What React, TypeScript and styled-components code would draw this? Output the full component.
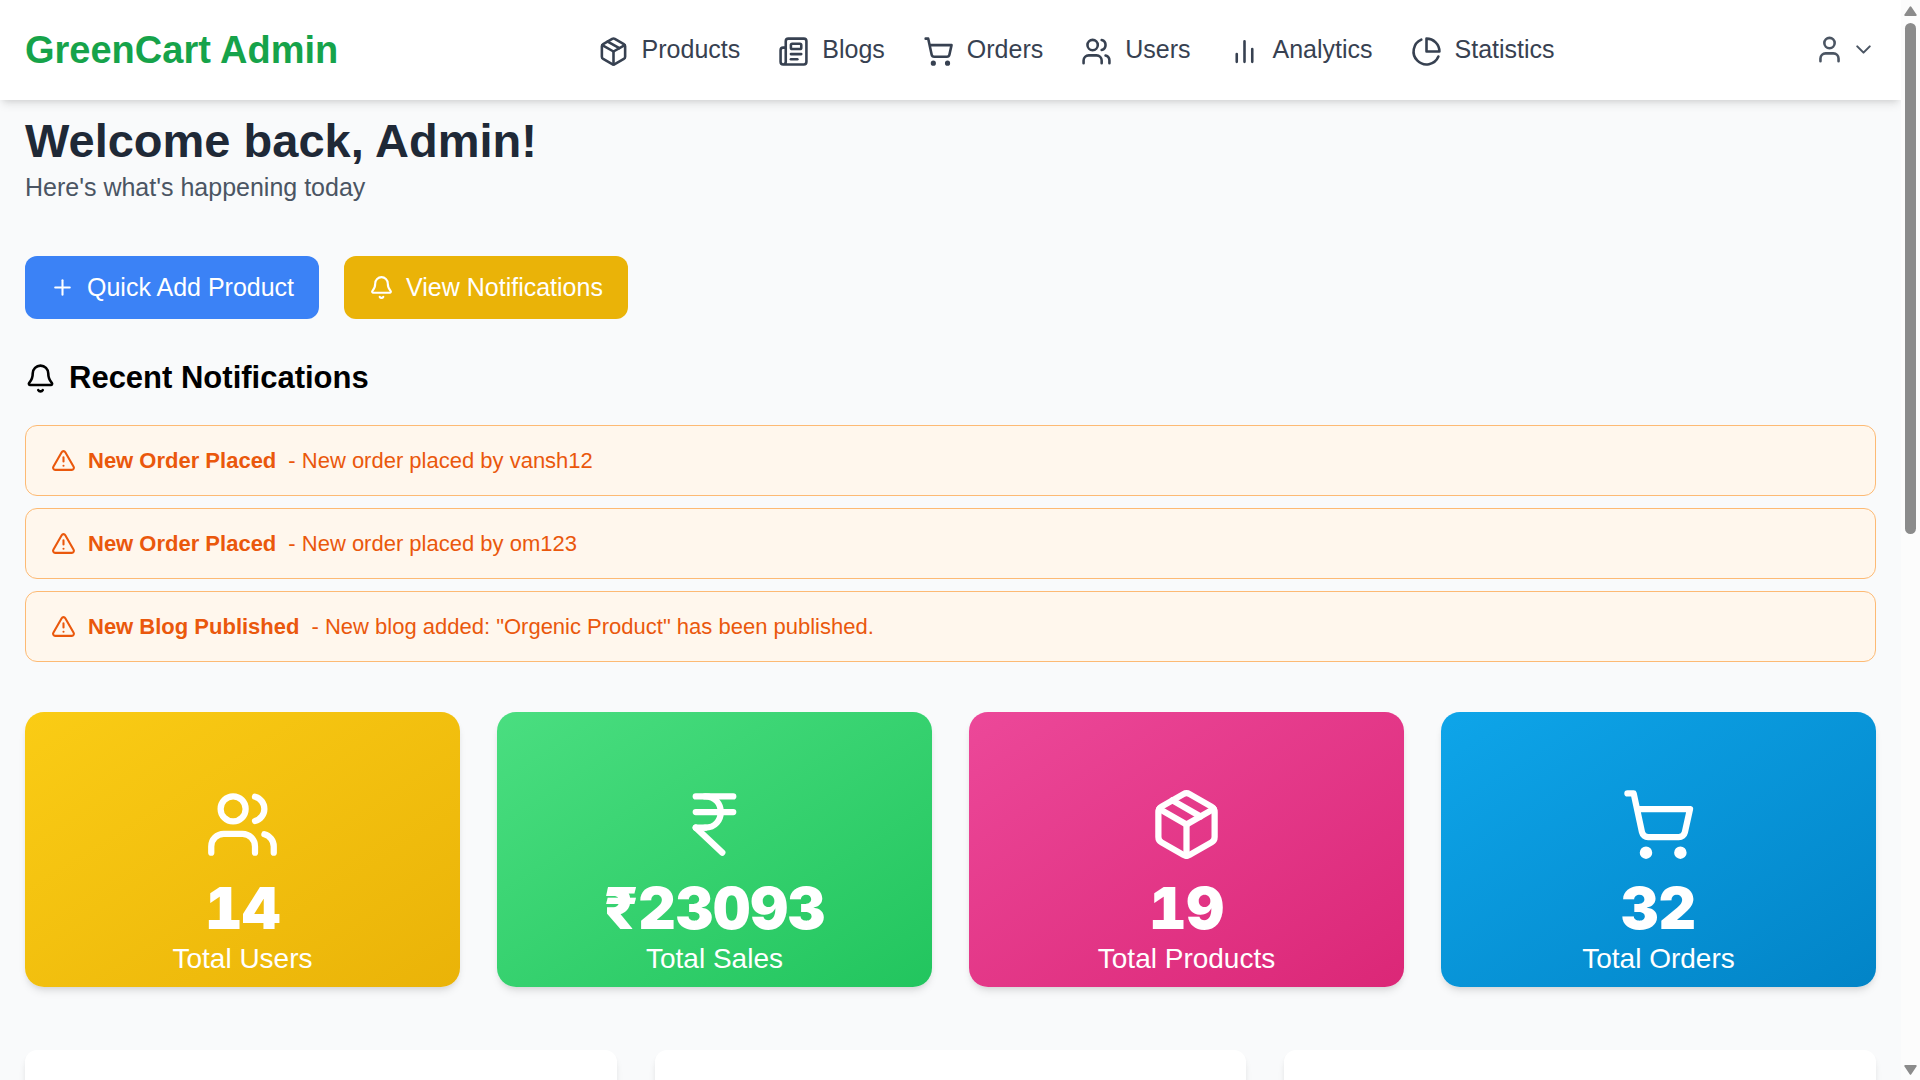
import React from "react";
import styled, { createGlobalStyle } from "styled-components";
import {
  Bell,
  ChevronDown,
  IndianRupee,
  Newspaper,
  Package,
  Plus,
  ShoppingCart,
  TriangleAlert,
  User,
  Users,
} from "lucide-react";

const GlobalStyle = createGlobalStyle`
  *, *::before, *::after { box-sizing: border-box; }
  body {
    margin: 0;
    overflow: hidden;
    background: #f9fafb;
    font-family: "Liberation Sans", Arial, sans-serif;
    font-size: 25px;
    line-height: 37px;
    color: #000;
  }
  h1, h2, p, ul { margin: 0; padding: 0; }
  ul { list-style: none; }
  button { font: inherit; border: 0; cursor: pointer; }
  svg { flex-shrink: 0; }
`;

const Shell = styled.div`
  display: grid;
  grid-template-columns: minmax(0, 1fr) 19px;
  height: 100vh;
`;

const Page = styled.div`
  overflow: hidden;
  background: #f9fafb;
`;

const Header = styled.header`
  display: flex;
  align-items: center;
  justify-content: space-between;
  height: 100px;
  padding: 0 25px;
  background: #fff;
  box-shadow: 0 6px 9px -2px rgba(0, 0, 0, 0.1), 0 3px 6px -3px rgba(0, 0, 0, 0.1);
`;

const Brand = styled.a`
  font-size: 38px;
  line-height: 50px;
  font-weight: 700;
  color: #16a34a;
  text-decoration: none;
`;

const Nav = styled.nav`
  display: flex;
  gap: 38px;
  padding-bottom: 1px;
`;

const NavLink = styled.a`
  color: #374151;
  text-decoration: none;
  white-space: nowrap;

  svg {
    margin-right: 13px;
    vertical-align: middle;
  }
`;

const AccountButton = styled.button`
  display: flex;
  align-items: center;
  gap: 6px;
  padding: 0 0 1px;
  background: none;
  color: #4b5563;
`;

const Main = styled.main`
  padding: 13px 25px 0;
`;

const Title = styled.h1`
  font-size: 47px;
  line-height: 56px;
  color: #1f2937;
`;

const Subtitle = styled.p`
  color: #4b5563;
`;

const Actions = styled.div`
  display: flex;
  gap: 25px;
  margin-top: 50px;
`;

const ActionButton = styled.button<{ $color: string }>`
  display: flex;
  align-items: center;
  gap: 12px;
  padding: 13px 25px;
  border-radius: 12px;
  background: ${(p) => p.$color};
  color: #fff;
`;

const SectionTitle = styled.h2`
  display: flex;
  align-items: center;
  gap: 13px;
  margin: 37px 0 25px;
  font-size: 31px;
  line-height: 44px;
`;

const NoticeList = styled.ul`
  display: grid;
  gap: 12px;
`;

const Notice = styled.li`
  display: flex;
  align-items: center;
  gap: 12px;
  padding: 19px 25px;
  border: 1px solid #fdba74;
  border-radius: 12px;
  background: #fff7ed;
  color: #ea580c;
  font-size: 22px;
  line-height: 31px;
`;

const StatGrid = styled.section`
  display: grid;
  grid-template-columns: repeat(4, 1fr);
  gap: 37px;
  margin-top: 50px;
`;

const StatCard = styled.article<{ $from: string; $to: string }>`
  display: flex;
  flex-direction: column;
  align-items: center;
  padding: 75px 25px 8px;
  border-radius: 19px;
  background: linear-gradient(to bottom right, ${(p) => p.$from}, ${(p) => p.$to});
  box-shadow: 0 6px 9px -2px rgba(0, 0, 0, 0.1), 0 3px 6px -3px rgba(0, 0, 0, 0.1);
  color: #fff;
`;

const StatValue = styled.p`
  margin-top: 15px;
  font-family: "Arial Black", Inter, sans-serif;
  font-size: 58px;
  line-height: 62px;
  font-weight: 900;
  font-variant-numeric: tabular-nums;
`;

const StatLabel = styled.p`
  font-size: 28px;
  line-height: 40px;
`;

const PanelGrid = styled.section`
  display: grid;
  grid-template-columns: repeat(3, 1fr);
  gap: 38px;
  margin-top: 63px;
`;

const Panel = styled.div`
  min-height: 400px;
  border-radius: 12px;
  background: #fff;
  box-shadow: 0 6px 9px -2px rgba(0, 0, 0, 0.1), 0 3px 6px -3px rgba(0, 0, 0, 0.1);
`;

const ScrollTrack = styled.div`
  display: flex;
  flex-direction: column;
  align-items: center;
  padding: 6px 0 5px;
  background: #fcfcfc;
`;

const ScrollRail = styled.div`
  display: grid;
  grid-template-rows: 40fr 41fr;
  flex: 1;
  width: 11px;
  margin: 7px 0;
`;

const ScrollThumb = styled.div`
  border-radius: 6px;
  background: #8b8b8b;
`;

type IconProps = { size: number };

const strokeProps = {
  viewBox: "0 0 24 24",
  fill: "none",
  stroke: "currentColor",
  strokeWidth: 2,
  strokeLinecap: "round" as const,
  strokeLinejoin: "round" as const,
};

const BarsIcon = ({ size }: IconProps) => (
  <svg width={size} height={size} {...strokeProps}>
    <path d="M18 20V10M12 20V4M6 20v-6" />
  </svg>
);

const PieIcon = ({ size }: IconProps) => (
  <svg width={size} height={size} {...strokeProps}>
    <path d="M21.21 15.89A10 10 0 1 1 8 2.83" />
    <path d="M22 12A10 10 0 0 0 12 2v10z" />
  </svg>
);

const Arrow = ({ down }: { down?: boolean }) => (
  <svg width="13" height="10" viewBox="0 0 13 10" fill="#8b8b8b">
    <path
      d={
        down
          ? "M1.5 0h10a1 1 0 0 1 1 1.6L7.3 9.2a1 1 0 0 1-1.6 0L.5 1.6A1 1 0 0 1 1.5 0z"
          : "M1.5 10h10a1 1 0 0 0 1-1.6L7.3.8a1 1 0 0 0-1.6 0L.5 8.4A1 1 0 0 0 1.5 10z"
      }
    />
  </svg>
);

const navItems = [
  { label: "Products", Icon: Package },
  { label: "Blogs", Icon: Newspaper },
  { label: "Orders", Icon: ShoppingCart },
  { label: "Users", Icon: Users },
  { label: "Analytics", Icon: BarsIcon },
  { label: "Statistics", Icon: PieIcon },
];

const notices = [
  { title: "New Order Placed", text: "New order placed by vansh12" },
  { title: "New Order Placed", text: "New order placed by om123" },
  { title: "New Blog Published", text: 'New blog added: "Orgenic Product" has been published.' },
];

const stats = [
  { value: "14", label: "Total Users", Icon: Users, from: "#facc15", to: "#eab308" },
  { value: "₹23093", label: "Total Sales", Icon: IndianRupee, from: "#4ade80", to: "#22c55e" },
  { value: "19", label: "Total Products", Icon: Package, from: "#ec4899", to: "#db2777" },
  { value: "32", label: "Total Orders", Icon: ShoppingCart, from: "#0ea5e9", to: "#0284c7" },
];

export default function App() {
  return (
    <>
      <GlobalStyle />
      <Shell>
        <Page>
          <Header>
            <Brand href="#home">GreenCart Admin</Brand>
            <Nav>
              {navItems.map(({ label, Icon }) => (
                <NavLink key={label} href={`#${label.toLowerCase()}`}>
                  <Icon size={31} />
                  {label}
                </NavLink>
              ))}
            </Nav>
            <AccountButton type="button" aria-label="Account">
              <User size={31} />
              <ChevronDown size={25} />
            </AccountButton>
          </Header>
          <Main>
            <Title>Welcome back, Admin!</Title>
            <Subtitle>Here's what's happening today</Subtitle>
            <Actions>
              <ActionButton type="button" $color="#3b82f6">
                <Plus size={25} />
                Quick Add Product
              </ActionButton>
              <ActionButton type="button" $color="#eab308">
                <Bell size={25} />
                View Notifications
              </ActionButton>
            </Actions>
            <SectionTitle>
              <Bell size={31} />
              Recent Notifications
            </SectionTitle>
            <NoticeList>
              {notices.map(({ title, text }) => (
                <Notice key={text}>
                  <TriangleAlert size={25} />
                  <strong>{title}</strong>
                  <span>- {text}</span>
                </Notice>
              ))}
            </NoticeList>
            <StatGrid>
              {stats.map(({ value, label, Icon, from, to }) => (
                <StatCard key={label} $from={from} $to={to}>
                  <Icon size={75} />
                  <StatValue>{value}</StatValue>
                  <StatLabel>{label}</StatLabel>
                </StatCard>
              ))}
            </StatGrid>
            <PanelGrid>
              <Panel />
              <Panel />
              <Panel />
            </PanelGrid>
          </Main>
        </Page>
        <ScrollTrack>
          <Arrow />
          <ScrollRail>
            <ScrollThumb />
          </ScrollRail>
          <Arrow down />
        </ScrollTrack>
      </Shell>
    </>
  );
}
